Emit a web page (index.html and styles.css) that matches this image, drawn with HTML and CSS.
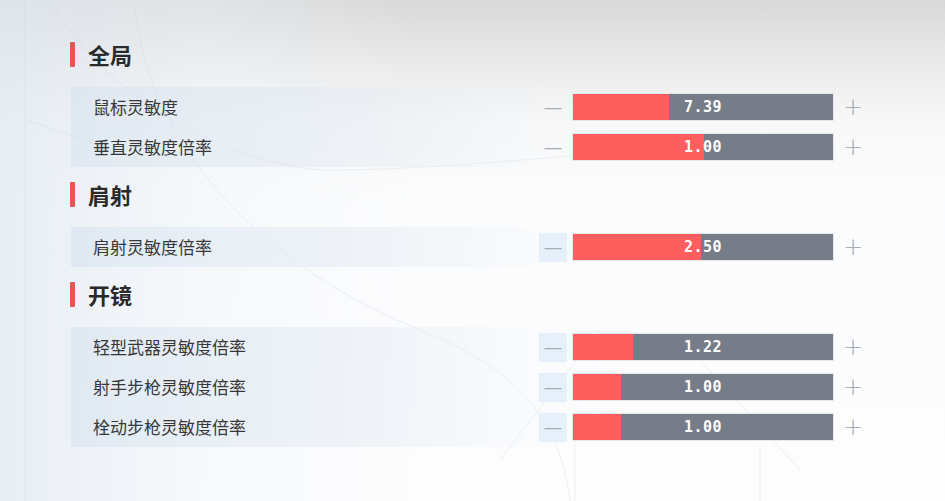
FILE: index.html
```html
<!DOCTYPE html>
<html lang="zh-CN">
<head>
    <meta charset="UTF-8">
    <meta name="viewport" content="width=device-width, initial-scale=1.0">
    <title>灵敏度设置</title>
    <link rel="stylesheet" href="styles.css">
</head>
<body>
    <!-- faint backdrop lines -->
    <svg class="backdrop" width="945" height="501" viewBox="0 0 945 501">
        <line x1="25" y1="0" x2="25" y2="501" />
        <path d="M50 0 C120 120 260 170 330 170 C420 170 520 160 640 150" />
        <path d="M135 10 C150 140 250 260 420 330 C520 370 560 420 570 501" />
        <path d="M28 120 L140 160" />
        <path d="M600 330 L500 460" />
        <path d="M700 360 L800 470" />
        <line x1="575" y1="445" x2="575" y2="501" />
        <line x1="760" y1="445" x2="760" y2="501" />
    </svg>

    <div class="settings">
        <h3 class="section-title">全局</h3>
        <div class="panel">
            <div class="row">
                <span class="label">鼠标灵敏度</span>
                <button class="step plain">—</button>
                <div class="bar"><div class="fill" style="width: 96px"></div><span class="value">7.39</span></div>
                <button class="step plus">+</button>
            </div>
            <div class="row">
                <span class="label">垂直灵敏度倍率</span>
                <button class="step plain">—</button>
                <div class="bar"><div class="fill" style="width: 131px"></div><span class="value">1.00</span></div>
                <button class="step plus">+</button>
            </div>
        </div>

        <h3 class="section-title">肩射</h3>
        <div class="panel">
            <div class="row">
                <span class="label">肩射灵敏度倍率</span>
                <button class="step">—</button>
                <div class="bar"><div class="fill" style="width: 128px"></div><span class="value">2.50</span></div>
                <button class="step plus">+</button>
            </div>
        </div>

        <h3 class="section-title">开镜</h3>
        <div class="panel">
            <div class="row">
                <span class="label">轻型武器灵敏度倍率</span>
                <button class="step">—</button>
                <div class="bar"><div class="fill" style="width: 60px"></div><span class="value">1.22</span></div>
                <button class="step plus">+</button>
            </div>
            <div class="row">
                <span class="label">射手步枪灵敏度倍率</span>
                <button class="step">—</button>
                <div class="bar"><div class="fill" style="width: 48px"></div><span class="value">1.00</span></div>
                <button class="step plus">+</button>
            </div>
            <div class="row">
                <span class="label">栓动步枪灵敏度倍率</span>
                <button class="step">—</button>
                <div class="bar"><div class="fill" style="width: 48px"></div><span class="value">1.00</span></div>
                <button class="step plus">+</button>
            </div>
        </div>
    </div>
</body>
</html>
```

FILE: styles.css
```css
html, body {
    margin: 0;
    padding: 0;
}
body {
    width: 945px;
    height: 501px;
    overflow: hidden;
    position: relative;
    font-family: "Noto Sans CJK SC", "Noto Sans", sans-serif;
    color: #333;
    background:
        linear-gradient(to right, rgba(225, 233, 242, 0.75) 0, rgba(238, 243, 248, 0.4) 200px, rgba(255, 255, 255, 0) 420px),
        linear-gradient(to bottom, #d8d8d8 0, #ececec 70px, #f8f8f8 120px, #fbfcfd 200px, #fdfdfe 100%);
}
.backdrop {
    position: absolute;
    left: 0;
    top: 0;
    fill: none;
    stroke: #c9d3dc;
    stroke-width: 1;
    opacity: 0.3;
}
.settings {
    position: relative;
    padding: 41px 0 0 70px;
    width: 800px;
}
.section-title {
    display: flex;
    align-items: center;
    height: 26px;
    margin: 14px 0 20px 0;
    font-size: 22px;
    font-weight: bold;
    color: #2a2a2a;
    line-height: 24px;
}
.section-title:first-child {
    margin-top: 0;
    margin-bottom: 20px;
}
.section-title::before {
    content: "";
    width: 5px;
    height: 25px;
    margin-right: 13px;
    background: #ea5455;
    border-radius: 1px;
}
.panel {
    margin-left: 1px;
    background: linear-gradient(to right, rgba(214, 226, 238, 0.55) 0, rgba(224, 233, 242, 0.45) 300px, rgba(240, 245, 250, 0.15) 470px, rgba(255, 255, 255, 0) 540px);
}
.row {
    display: grid;
    grid-template-columns: 463px 28px 262px 28px;
    column-gap: 5px;
    align-items: center;
    height: 40px;
}
.label {
    padding-left: 22px;
    font-size: 17px;
    line-height: 22px;
    color: #383838;
}
.step {
    width: 28px;
    height: 29px;
    padding: 0;
    border: none;
    background: #e6f0fa;
    color: #a6adb6;
    font-family: "Liberation Sans", sans-serif;
    font-size: 17px;
    line-height: 29px;
    text-align: center;
    cursor: pointer;
}
.plus {
    font-family: "DejaVu Sans", sans-serif;
    font-weight: 200;
    font-size: 24px;
    line-height: 28px;
}
.plus,
.plain {
    background: none;
}
.bar {
    position: relative;
    height: 28px;
    background: #767c88;
    border: 1px solid #e4e7eb;
    box-sizing: border-box;
    display: flex;
    align-items: center;
    justify-content: center;
}
.fill {
    position: absolute;
    left: 0;
    top: 0;
    bottom: 0;
    background: #fe5e5e;
}
.value {
    position: relative;
    color: #fff;
    font-family: "DejaVu Sans Mono", monospace;
    font-weight: bold;
    font-size: 15px;
    letter-spacing: 0.5px;
}
```
